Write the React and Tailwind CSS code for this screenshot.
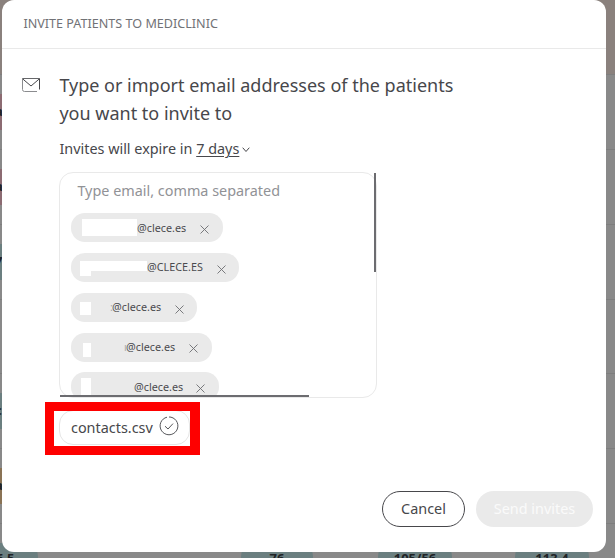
import React from 'react';

const rows = [
  { tag: '', text: '', head: true },
  { tag: 'bg-[#8c6b72]', text: 'a' },
  { tag: 'bg-[#8c6b72]', text: 'a' },
  { tag: 'bg-[#6b7f80]', text: '7' },
  { tag: '', text: '' },
  { tag: 'bg-[#6b7f80]', text: 'c' },
  { tag: 'bg-[#8a7355]', text: 'a' },
];

const contacts = [
  { domain: '@clece.es', chip: 'w-[152px] h-[29px]', mask: 'ml-[11px] mt-[6px] w-[55px] h-[17px]', gap: 'ml-0', width: 'w-[49px]', close: 'ml-[13.5px] mt-[11.5px]' },
  { domain: '@CLECE.ES', chip: 'w-[168px] h-[29px]', mask: 'ml-[9px] mt-[8px] w-[67px] h-[10px]', step: true, gap: 'ml-0 -mt-px', width: 'w-[56px]', close: 'ml-[13.5px] mt-[11.5px]' },
  { domain: '@clece.es', chip: 'w-[126px] h-[29px]', mask: 'ml-[9px] mt-[9px] w-[11px] h-[13px]', gap: 'ml-[21px] -mt-px', width: 'w-[49px]', sliver: ':', close: 'ml-[13.5px] mt-[11.5px]' },
  { domain: '@clece.es', chip: 'w-[141px] h-[29px]', mask: 'ml-[12px] mt-[10px] w-[8px] h-[14px]', gap: 'ml-[35px] -mt-px', width: 'w-[49px]', sliver: 'ı', close: 'ml-[13.5px] mt-[10.5px]' },
  { domain: '@clece.es', chip: 'w-[148px] h-[29px] -mt-px', mask: 'ml-[10px] mt-[6px] w-[10px] h-[17px]', gap: 'ml-[43px]', width: 'w-[49px]', close: 'ml-[12.5px] mt-[11.5px]' },
];

function Backdrop() {
  return (
    <div className="flex h-[558px] w-full flex-col overflow-hidden text-[13px] font-bold text-[#202326]">
      {rows.map((r, i) => (
        <div
          key={i}
          className={`flex shrink-0 items-center border-b border-[#7e7e7e] ${r.head ? 'h-[75px] bg-[#8a817d]' : i === 4 ? 'h-[74px] bg-[#898989]' : 'h-[75px] bg-[#898989]'}`}
        >
          <div className={`flex h-9 w-4 items-center overflow-hidden ${r.tag}`}>
            <span className="-ml-[5px]">{r.text}</span>
          </div>
        </div>
      ))}
      <div className="flex shrink-0 items-start bg-[#898989] pt-[19px] leading-[30px]">
        <div className="h-9 w-[38px] rounded-[14px] rounded-l-none bg-[#6b7f80]">
          <span className="-ml-1">6.5</span>
        </div>
        <div className="ml-[203px] h-9 w-[72px] rounded-[14px] bg-[#6b7f80] text-center">76</div>
        <div className="ml-[65px] h-9 w-[74px] rounded-[14px] bg-[#6b7f80] text-center">105/56</div>
        <div className="ml-[63px] h-9 w-[74px] rounded-[14px] bg-[#6b7f80] text-center">113.4</div>
      </div>
    </div>
  );
}

function Close({ className }) {
  return (
    <svg className={`h-[9px] w-[9px] shrink-0 ${className}`} viewBox="0 0 9 9" fill="none" stroke="#6c6d70" strokeWidth="0.9">
      <path d="M.5.5l8 8M8.5.5l-8 8" />
    </svg>
  );
}

function Chip({ c }) {
  return (
    <div className={`flex shrink-0 items-start rounded-[14px] bg-[#eaeaea] ${c.chip}`}>
      <div className={`shrink-0 bg-white ${c.mask}`}>
        {c.step && <div className="h-[15px] w-[11px] bg-white" />}
      </div>
      <div className={`relative shrink-0 whitespace-nowrap text-[10.8px] leading-[30px] text-[#4b4b4f] ${c.gap} ${c.width}`}>
        {c.sliver && <span className="absolute -left-[2px] text-[#aaaaac]">{c.sliver}</span>}
        {c.domain}
      </div>
      <Close className={c.close} />
    </div>
  );
}

export default function App() {
  return (
    <div className="relative h-[558px] w-[615px] overflow-hidden font-['Noto_Sans',sans-serif] text-[#47474b]">
      <Backdrop />
      <div className="absolute left-[2px] top-0 flex h-[552px] w-[604px] flex-col rounded-[12px] bg-white">
        <header className="flex h-[49px] shrink-0 items-center border-b border-[#e9e9e9] pl-[21.4px] text-[12.6px] leading-[18px] text-[#717276]">
          <span className="-mt-px">INVITE PATIENTS TO MEDICLINIC</span>
        </header>

        <main className="flex">
          <svg className="ml-[20px] mt-[29px] h-[15px] w-[20px] shrink-0" viewBox="0 0 20 15" fill="none" stroke="#47474b" strokeWidth="1">
            <path d="M15 13.5H2.5Q.5 13.5 .5 11.5V.5" stroke="#8b8c8f" />
            <path d="M.5 .5H17.5" stroke="#66676a" />
            <path d="M17.5 .5V11.5M.8 1L9 8 17.2 1" />
          </svg>
          <div className="ml-[17px] flex flex-col">
            <h1 className="mt-[22px] whitespace-nowrap pl-[0.4px] text-[18px] leading-7">
              Type or import email addresses of the patients
              <br />
              you want to invite to
            </h1>
            <div className="mt-[12px] flex h-5 items-center whitespace-nowrap pl-[0.4px] text-[14.4px] leading-5">
              <span>Invites will expire in&nbsp;</span>
              <span className="underline decoration-1 underline-offset-[2px]">7 days</span>
              <svg className="ml-[3px] mt-[2px] h-[6px] w-[8px]" viewBox="0 0 8 6" fill="none" stroke="#47474b">
                <path d="M.7.7L4 4.5 7.3.7" />
              </svg>
            </div>

            <div className="mt-[13px] h-[226px] w-[318px] overflow-hidden rounded-[14px] border border-[#e9e9e9]">
              <div className="flex h-[223px] flex-col overflow-hidden pl-[11px]">
                <div className="h-[40px] shrink-0 pl-[6.4px] text-[14.4px] leading-[36px] text-[#919296]">Type email, comma separated</div>
                <div className="flex flex-col gap-[11px]">
                  {contacts.map((c, i) => (
                    <Chip key={i} c={c} />
                  ))}
                </div>
              </div>
            </div>

            <div className="mt-[12px] flex h-[35px] w-[131px] items-center rounded-[14px] border border-[#e5e5e5] pl-[11px] text-[14.4px]">
              <span>contacts.csv</span>
              <svg className="-mt-[3px] ml-[6px] h-[20px] w-[20px]" viewBox="0 0 20 20" fill="none" stroke="#55565a" strokeWidth="1">
                <path d="M12 1.2A8.9 8.9 0 1 1 8 1.2M12 1.2A8.9 8.9 0 0 0 10 1" />
                <path d="M6 10.2l3 2.8 5-5.4" />
              </svg>
            </div>
          </div>
        </main>

        <footer className="mt-auto mb-[25px] flex justify-end gap-[11px] pr-[13px] text-[14.4px]">
          <button className="h-9 w-[83px] rounded-full border border-[#47474b]">Cancel</button>
          <button className="h-9 w-[117px] rounded-full bg-[#eaeaea] text-[#fafafa]">Send invites</button>
        </footer>
      </div>

      <div className="absolute left-[374px] top-[173px] h-[99px] w-[2px] bg-[#6c6c70]" />
      <div className="absolute left-[60px] top-[395px] h-[2px] w-[249px] bg-[#6c6c70]" />
      <div className="absolute left-[45px] top-[402px] h-[53px] w-[155px] border-[9px] border-r-[10px] border-[#fe0000]" />
    </div>
  );
}
